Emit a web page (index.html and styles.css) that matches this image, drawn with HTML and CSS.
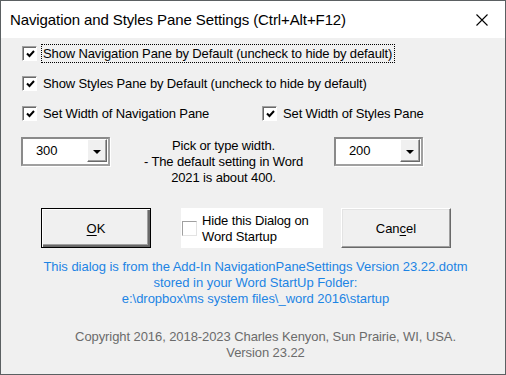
FILE: index.html
```html
<!DOCTYPE html>
<html lang="en">
<head>
    <meta charset="UTF-8">
    <title>Navigation and Styles Pane Settings</title>
    <link rel="stylesheet" href="styles.css">
</head>
<body>
    <div class="dialog">
        <div class="titlebar">
            <span class="title">Navigation and Styles Pane Settings (Ctrl+Alt+F12)</span>
            <svg class="close" width="12" height="12" viewBox="0 0 12 12">
                <path d="M0.5 0.5 L11.5 11.5 M11.5 0.5 L0.5 11.5" stroke="#000" stroke-width="1.1" fill="none"/>
            </svg>
        </div>

        <div class="content">
            <label class="check-row first">
                <span class="box checked"><svg width="9" height="8" viewBox="0 0 9 8"><path d="M1 3.5 L3.5 6 L8 1" stroke="#000" stroke-width="2" fill="none"/></svg></span>
                <span class="label focused">Show Navigation Pane by Default (uncheck to hide by default)</span>
            </label>
            <label class="check-row">
                <span class="box checked"><svg width="9" height="8" viewBox="0 0 9 8"><path d="M1 3.5 L3.5 6 L8 1" stroke="#000" stroke-width="2" fill="none"/></svg></span>
                <span class="label">Show Styles Pane by Default (uncheck to hide by default)</span>
            </label>
            <div class="width-row">
                <label class="check-row">
                    <span class="box checked"><svg width="9" height="8" viewBox="0 0 9 8"><path d="M1 3.5 L3.5 6 L8 1" stroke="#000" stroke-width="2" fill="none"/></svg></span>
                    <span class="label">Set Width of Navigation Pane</span>
                </label>
                <label class="check-row">
                    <span class="box checked"><svg width="9" height="8" viewBox="0 0 9 8"><path d="M1 3.5 L3.5 6 L8 1" stroke="#000" stroke-width="2" fill="none"/></svg></span>
                    <span class="label">Set Width of Styles Pane</span>
                </label>
            </div>

            <div class="combo-row">
                <div class="combo">
                    <span class="combo-value">300</span>
                    <span class="combo-btn"><span class="arrow"></span></span>
                </div>
                <div class="hint">Pick or type width.<br>- The default setting in Word<br>2021 is about 400.</div>
                <div class="combo">
                    <span class="combo-value">200</span>
                    <span class="combo-btn"><span class="arrow"></span></span>
                </div>
            </div>

            <div class="button-row">
                <button class="btn default"><u>O</u>K</button>
                <label class="hide-box">
                    <span class="box"></span>
                    <span class="label">Hide this Dialog on<br>Word Startup</span>
                </label>
                <button class="btn">Can<u>c</u>el</button>
            </div>

            <div class="info">
                This dialog is from the Add-In NavigationPaneSettings Version 23.22.dotm<br>
                stored in your Word StartUp Folder:<br>
                e:\dropbox\ms system files\_word 2016\startup
            </div>

            <div class="copyright">
                Copyright 2016, 2018-2023 Charles Kenyon, Sun Prairie, WI, USA.<br>
                Version 23.22
            </div>
        </div>
    </div>
</body>
</html>
```

FILE: styles.css
```css
body {
    margin: 0;
    font-family: "Liberation Sans", Arial, sans-serif;
}
.dialog {
    width: 506px;
    height: 375px;
    box-sizing: border-box;
    border: 1px solid #5b6062;
    background-color: #f0f0f0;
    display: flex;
    flex-direction: column;
}
.titlebar {
    height: 37px;
    background-color: #fff;
    display: flex;
    align-items: center;
    padding-left: 9px;
    padding-right: 17px;
}
.title {
    flex-grow: 1;
    font-size: 15px;
    letter-spacing: -0.1px;
    color: #000;
    margin-top: -1px;
}
.content {
    padding-left: 21px;
    font-size: 13px;
    letter-spacing: -0.13px;
    color: #000;
}
.check-row {
    display: flex;
    align-items: center;
    height: 20px;
    margin-top: 10px;
}
.check-row.first {
    margin-top: 5px;
}
.box {
    width: 13px;
    height: 13px;
    flex-shrink: 0;
    background-color: #fff;
    border: 1px solid;
    border-color: #a0a0a0 #fff #fff #a0a0a0;
    box-shadow: inset 1px 1px 0 #696969;
    display: flex;
    align-items: center;
    justify-content: center;
}
.box svg {
    margin: 1px 0 0 1px;
}
.label {
    margin-left: 4px;
    padding: 1px 2px;
}
.label.focused {
    margin-left: 4px;
    padding-left: 1px;
    border: 1px dotted #000;
}
.width-row {
    display: grid;
    grid-template-columns: 240px auto;
}
.combo-row {
    display: flex;
    margin-top: 14px;
    margin-left: -1px;
}
.combo {
    width: 89px;
    height: 29px;
    box-sizing: border-box;
    background-color: #fff;
    border: 2px solid;
    border-color: #8a8a8a #a0a0a0 #a0a0a0 #8a8a8a;
    box-shadow: 1px 1px 0 #fff;
    display: flex;
    align-items: center;
    justify-content: space-between;
}
.combo-value {
    padding-left: 13px;
    margin-top: -3px;
}
.combo-btn {
    width: 20px;
    height: 23px;
    box-sizing: border-box;
    align-self: flex-start;
    background-color: #f0f0f0;
    border: 1px solid;
    border-color: #fff #696969 #696969 #fff;
    box-shadow: inset -1px -1px 0 #a0a0a0;
    display: flex;
    align-items: center;
    justify-content: center;
    margin-right: 1px;
}
.arrow {
    width: 0;
    height: 0;
    border-left: 4px solid transparent;
    border-right: 4px solid transparent;
    border-top: 4px solid #000;
    margin-top: 2px;
}
.hint {
    width: 221px;
    text-align: center;
    line-height: 16px;
    margin-top: 1px;
    padding-left: 3px;
}
.button-row {
    display: flex;
    align-items: flex-start;
    margin-top: 22px;
    margin-left: 19px;
}
.btn {
    width: 110px;
    height: 40px;
    font-family: "Liberation Sans", Arial, sans-serif;
    font-size: 13px;
    color: #000;
    background-color: #f0f0f0;
    border: 1px solid;
    border-color: #fff #696969 #696969 #fff;
    box-shadow: inset -1px -1px 0 #a0a0a0, inset 1px 1px 0 #e3e3e3;
    padding: 0;
}
.btn.default {
    border: 1px solid #000;
    box-shadow: inset 1px 1px 0 #fff, inset -2px -2px 0 #696969, inset -3px -3px 0 #a0a0a0;
}
.btn u {
    text-decoration-thickness: 1px;
    text-underline-offset: 2px;
}
.hide-box {
    width: 142px;
    height: 40px;
    margin-left: 30px;
    margin-right: 18px;
    background-color: #fff;
    display: flex;
    align-items: center;
}
.hide-box .box {
    margin-left: 1px;
    background-color: #fff;
    border-color: #a0a0a0 #e3e3e3 #e3e3e3 #a0a0a0;
    box-shadow: none;
}
.hide-box .label {
    line-height: 16px;
    margin-left: 3px;
    margin-top: 1px;
}
.info {
    margin-top: 11px;
    margin-left: -21px;
    padding-left: 5px;
    text-align: center;
    line-height: 16px;
    letter-spacing: -0.03px;
    color: #1c84e4;
}
.copyright {
    margin-top: 22px;
    margin-left: -21px;
    padding-left: 25px;
    text-align: center;
    line-height: 16px;
    letter-spacing: -0.08px;
    color: #6b6b6b;
}
```
